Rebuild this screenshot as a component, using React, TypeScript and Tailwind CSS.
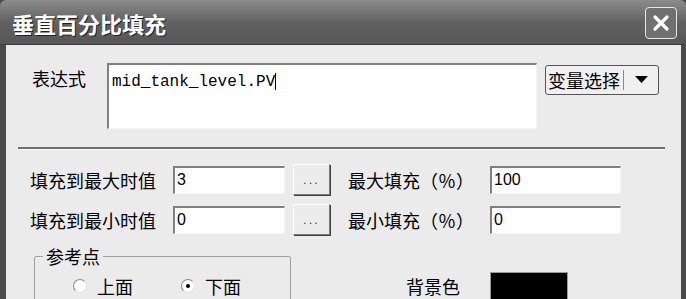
const cjk = { fontFamily: '"Noto Sans CJK SC", "Noto Sans", sans-serif' }

function Inset({ className = '', children }: { className?: string; children?: React.ReactNode }) {
  return (
    <div
      className={`bg-white border-t-2 border-l-2 border-b border-r border-t-[#808080] border-l-[#808080] border-b-[#f4f4f4] border-r-[#f4f4f4] ${className}`}
    >
      {children}
    </div>
  )
}

function DotsButton() {
  return (
    <div className="w-[37px] h-[31px] bg-[#ececec] border border-t-white border-l-white border-b-[#7a7a7a] border-r-[#7a7a7a] shadow-[1px_1px_0_#404040] flex items-center justify-center text-[13px] text-[#444] tracking-[2px] font-['Liberation_Sans']">
      ...
    </div>
  )
}

function Radio({ checked, label }: { checked?: boolean; label: string }) {
  return (
    <div className="flex items-center gap-[10px]">
      <span className="w-[14px] h-[14px] rounded-full bg-white border border-t-[#8a8a8a] border-l-[#8a8a8a] border-b-[#e0e0e0] border-r-[#e0e0e0] flex items-center justify-center">
        {checked && <span className="w-[4px] h-[4px] rounded-full bg-black" />}
      </span>
      <span className="text-[18px] leading-[24px] text-black">{label}</span>
    </div>
  )
}

export default function App() {
  return (
    <div className="w-[686px] h-[299px] overflow-hidden bg-[#4a4a4a] flex flex-col" style={cjk}>
      {/* title bar */}
      <div className="h-[45px] shrink-0 rounded-tl-[6px] rounded-tr-[6px] bg-gradient-to-b from-[#8c8c8c] via-[#626262] to-[#565656] border-b border-b-[#3c3c3c] flex items-center justify-between pl-[12px] pr-[9px]">
        <span className="text-white text-[22px] font-bold leading-none [text-shadow:1px_1px_0_#222] mt-[1px]">垂直百分比填充</span>
        <div className="w-[32px] h-[32px] rounded-[4px] border border-[#e8e8e8] bg-[#707070] flex items-center justify-center mt-[2px]">
          <svg width="20" height="20" viewBox="0 0 20 20">
            <path d="M4 4 L16 16 M16 4 L4 16" stroke="white" strokeWidth="3.2" strokeLinecap="round" />
          </svg>
        </div>
      </div>

      {/* body */}
      <div className="flex-1 ml-[6px] mr-[5px] bg-[#ebebeb] flex flex-col">
        {/* expression row */}
        <div className="flex items-start pt-[18px] pl-[26px]">
          <div className="w-[75px] text-[18px] leading-[24px] pt-[3px] text-black">表达式</div>
          <Inset className="w-[430px] h-[66px] pl-[3px] pt-[2px]">
            <span className="font-['Liberation_Mono'] text-[16px] leading-[20px] text-black">mid_tank_level.PV</span>
            <span className="inline-block w-px h-[17px] bg-black align-middle" />
          </Inset>
          <div className="ml-[8px] mt-[2px] w-[114px] h-[30px] rounded-[3px] border border-[#555] bg-[#f0f0f0] flex items-center">
            <span className="text-[18px] leading-none pl-[2px] text-black">变量选择</span>
            <span className="w-px h-[20px] bg-[#888] ml-[3px]" />
            <span className="flex-1 flex justify-center">
              <svg width="13" height="8" viewBox="0 0 13 8">
                <path d="M0 0 H13 L6.5 7 Z" fill="black" />
              </svg>
            </span>
          </div>
        </div>

        {/* separator */}
        <div className="mt-[18px] ml-[12px] w-[647px] h-[3px] bg-[#6e6e6e] border-b border-b-white" />

        {/* row 1 */}
        <div className="flex items-center mt-[14px] pl-[24px]">
          <div className="w-[143px] text-[18px] leading-[24px] text-black">填充到最大时值</div>
          <Inset className="w-[112px] h-[28px] pl-[2px] flex items-center">
            <span className="font-['Liberation_Sans'] text-[16px] text-black">3</span>
          </Inset>
          <div className="ml-[8px]"><DotsButton /></div>
          <div className="ml-[18px] w-[142px] text-[18px] leading-[24px] text-black">最大填充（％）</div>
          <Inset className="w-[131px] h-[28px] pl-[2px] flex items-center">
            <span className="font-['Liberation_Sans'] text-[16px] text-black">100</span>
          </Inset>
        </div>

        {/* row 2 */}
        <div className="flex items-center mt-[9px] pl-[24px]">
          <div className="w-[143px] text-[18px] leading-[24px] text-black">填充到最小时值</div>
          <Inset className="w-[112px] h-[28px] pl-[2px] flex items-center">
            <span className="font-['Liberation_Sans'] text-[16px] text-black">0</span>
          </Inset>
          <div className="ml-[8px]"><DotsButton /></div>
          <div className="ml-[18px] w-[142px] text-[18px] leading-[24px] text-black">最小填充（％）</div>
          <Inset className="w-[131px] h-[28px] pl-[2px] flex items-center">
            <span className="font-['Liberation_Sans'] text-[16px] text-black">0</span>
          </Inset>
        </div>

        {/* group + background colour */}
        <div className="flex items-start mt-[9px] pl-[28px]">
          <fieldset className="w-[257px] h-[80px] border border-[#a0a0a0] rounded-[2px]">
            <legend className="ml-[8px] px-[3px] text-[18px] leading-[24px] text-black">参考点</legend>
            <div className="flex gap-[48px] mt-[6px] pl-[38px]">
              <Radio label="上面" />
              <Radio checked label="下面" />
            </div>
          </fieldset>
          <div className="ml-[115px] mt-[30px] text-[18px] leading-[24px] text-black">背景色</div>
          <div className="ml-[30px] mt-[28px] w-[78px] h-[40px] bg-black border border-[#9a9a9a]" />
        </div>
      </div>
    </div>
  )
}
